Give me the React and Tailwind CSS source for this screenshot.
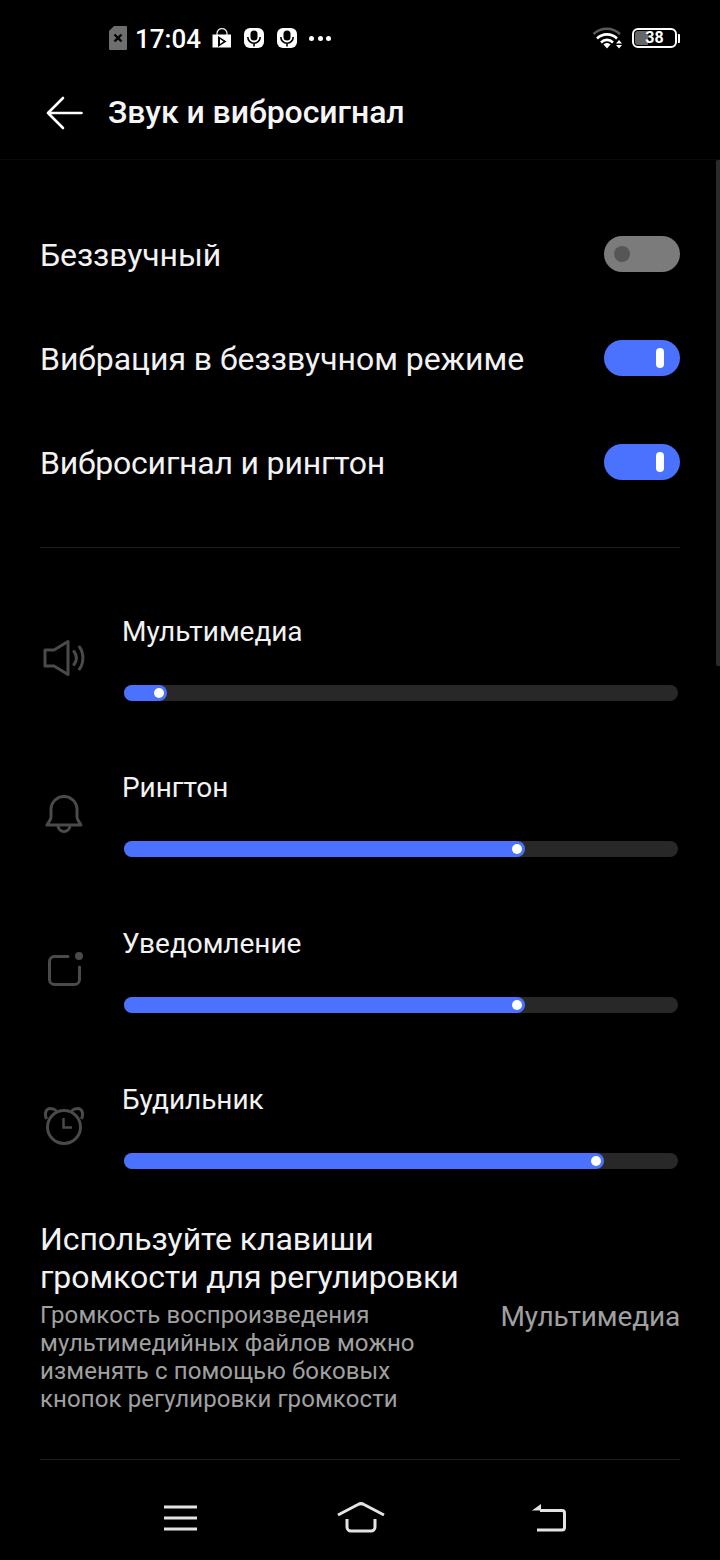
function StatusBar() {
  return (
    <div className="h-[76px] flex items-center pl-[109px] pr-[40px] justify-between shrink-0">
      <div className="flex items-center h-[28px]">
        <svg width="18" height="24" viewBox="0 0 18 24">
          <path d="M5 0h12a1 1 0 0 1 1 1v22a1 1 0 0 1-1 1H1a1 1 0 0 1-1-1V5z" fill="#6e6e6e" />
          <path d="M5.500 8.500l7 7M12.500 8.500l-7 7" stroke="#000" strokeWidth="2.400" />
        </svg>
        <span className="ml-[8px] mt-[2px] text-[26px] font-medium text-white leading-none w-[70px] whitespace-nowrap">17:04</span>
        <svg width="20" height="20" viewBox="0 0 20 20" className="ml-[7px]">
          <path d="M5 7V5.500a5 5 0 0 1 10 0V7" stroke="#e0e0e0" strokeWidth="1.300" fill="none" />
          <path d="M0.500 6.500h18.500v13H0.500z" fill="#fff" />
          <path d="M6 8l8.500 5.500L6 19z" fill="#000" />
          <path d="M8 11l3.500 2.500L8 16z" fill="#fff" />
        </svg>
        <Mic className="ml-[12px]" />
        <Mic className="ml-[13px]" />
        <div className="ml-[12px] flex gap-[3.5px]">
          <div className="w-[5px] h-[5px] rounded-full bg-white" />
          <div className="w-[5px] h-[5px] rounded-full bg-white" />
          <div className="w-[5px] h-[5px] rounded-full bg-white" />
        </div>
      </div>
      <div className="flex items-center">
        <svg width="32" height="24" viewBox="0 0 32 24">
          <path d="M1.500 8C9 1 20.500 1 28 8" stroke="#5a5a5a" strokeWidth="2.400" fill="none" />
          <path d="M5 12.500C10.500 7 19.500 7 25 12.500" stroke="#fff" strokeWidth="2.600" fill="none" />
          <path d="M9 16.500C12.500 13 17.500 13 21 16.500" stroke="#fff" strokeWidth="2.600" fill="none" />
          <path d="M11.500 18.500C13.500 16.500 16.500 16.500 18.500 18.500L15 22.500z" fill="#fff" />
          <path d="M27 14l3 3.500h-6zM27 22.500l3-3.500h-6z" fill="#fff" />
        </svg>
        <div className="relative ml-[8px] w-[45px] h-[20px] rounded-[6px] border-2 border-white overflow-hidden flex items-center justify-center">
          <div className="absolute left-[1px] top-[1px] bottom-[1px] w-[13px] rounded-l-[3px] bg-[#666]" />
          <span className="relative text-[16px] font-bold text-white leading-none">38</span>
        </div>
        <div className="ml-[1px] w-[2px] h-[9px] bg-white rounded-r-[1px]" />
      </div>
    </div>
  );
}

function Mic({ className }) {
  return (
    <svg width="20" height="20" viewBox="0 0 20 20" className={className}>
      <rect x="0" y="0" width="20" height="20" rx="6" fill="#fff" />
      <rect x="6.500" y="2.500" width="7" height="10" rx="3.500" fill="#000" />
      <path d="M3.800 9a6.200 6.200 0 0 0 12.400 0M10 15.500v3" stroke="#000" strokeWidth="1.600" fill="none" />
    </svg>
  );
}

function Toggle({ on }) {
  return on ? (
    <div className="w-[76px] h-[36px] rounded-full flex items-center justify-end pr-[16px] bg-[#4a72ff]">
      <div className="w-[8px] h-[20px] rounded-full bg-white" />
    </div>
  ) : (
    <div className="w-[76px] h-[36px] rounded-full flex items-center pl-[10px] bg-[#7b7b7b]">
      <div className="w-[16px] h-[16px] rounded-full bg-[#565656]" />
    </div>
  );
}

function ToggleRow({ label, on, labelClass }) {
  return (
    <div className="h-[104px] flex items-center justify-between">
      <span className={"mt-[2px] text-[32px] text-[#f2f2f2] leading-none " + (labelClass || "")}>{label}</span>
      <Toggle on={on} />
    </div>
  );
}

function SliderRow({ label, icon, value }) {
  return (
    <div className="h-[156px] flex">
      <div className="w-[82px] shrink-0 pt-[23px]">{icon}</div>
      <div className="flex-1">
        <div className="h-[36px] mt-[3px] text-[28px] leading-[36px] text-[#f2f2f2] tracking-[-0.05px]">{label}</div>
        <div className="mt-[35px] mx-[2px] h-[16px] rounded-full bg-[#282828]">
          <div className="relative h-[16px] rounded-full bg-[#4a72ff]" style={{ width: value }}>
            <div className="absolute right-[3px] top-[3px] w-[10px] h-[10px] rounded-full bg-white" />
          </div>
        </div>
      </div>
    </div>
  );
}

const ic = { stroke: "#4a4a4a", strokeWidth: 3, fill: "none" };

const SpeakerIcon = (
  <svg width="48" height="48" viewBox="0 0 48 48">
    <path d="M5 16h9L28 7.500v33L14 32H5z" {...ic} strokeLinejoin="round" />
    <path d="M34 17.500c3 4 3 9 0 13" {...ic} strokeLinecap="round" />
    <path d="M39.500 13c4.500 6 4.500 16 0 22" {...ic} strokeLinecap="round" />
  </svg>
);
const BellIcon = (
  <svg width="48" height="48" viewBox="0 0 48 48">
    <path d="M11 24V19.500a13 13 0 0 1 26 0V27c0 3 2.500 5 4 8H7c1.500-3 4-5 4-8z" {...ic} strokeLinejoin="round" />
    <path d="M18 35.500a6 6 0 0 0 12 0" {...ic} />
  </svg>
);
const NoteIcon = (
  <svg width="48" height="48" viewBox="0 0 48 48">
    <path d="M28 10.500H14.500a5 5 0 0 0-5 5v18a5 5 0 0 0 5 5h20a5 5 0 0 0 5-5V21" {...ic} strokeLinecap="round" />
    <circle cx="39" cy="10" r="4" fill="#4a4a4a" />
  </svg>
);
const AlarmIcon = (
  <svg width="48" height="48" viewBox="0 0 48 48">
    <circle cx="24" cy="25" r="16.500" {...ic} />
    <path d="M6.500 17C4 11 6 6.500 10.500 6.500C13 6.500 15 7.500 16.500 9M41.500 17C44 11 42 6.500 37.500 6.500C35 6.500 33 7.500 31.500 9" {...ic} />
    <path d="M23.500 16v9.500h8.500" {...ic} strokeWidth="2.500" />
  </svg>
);

function Nav() {
  const c = { stroke: "#e4e4e4", strokeWidth: 3, fill: "none" };
  return (
    <div className="h-[86px] flex items-center justify-between pl-[164px] pr-[154px] pt-[2px]">
      <svg width="34" height="30" viewBox="0 0 34 30">
        <path d="M0 4h33M0 15h33M0 26h33" {...c} />
      </svg>
      <svg width="48" height="32" viewBox="0 0 48 32" className="mr-[7px]">
        <path d="M1 13L21 2.500a6 6 0 0 1 6 0L47 13" {...c} />
        <path d="M10 17v8a4 4 0 0 0 4 4h20a4 4 0 0 0 4-4v-8" {...c} />
      </svg>
      <svg width="36" height="30" viewBox="0 0 36 30">
        <path d="M2 7.500L11 1v6.500z" fill="#e4e4e4" />
        <path d="M10 7.500h22a2.500 2.500 0 0 1 2.500 2.500v14.500a2.500 2.500 0 0 1-2.500 2.500H7" {...c} />
      </svg>
    </div>
  );
}

export default function App() {
  return (
    <div className="relative w-[720px] h-[1560px] bg-black overflow-hidden flex flex-col font-['Roboto',sans-serif]">
      <StatusBar />
      <div className="h-[84px] shrink-0 flex items-start border-b border-[#0a0a0a]">
        <svg width="38" height="34" viewBox="0 0 38 34" className="ml-[46px] mt-[20px]">
          <path d="M35.500 17H2M17 2L2 17l15 15" stroke="#fff" strokeWidth="2.600" fill="none" strokeLinecap="round" strokeLinejoin="round" />
        </svg>
        <span className="ml-[24px] mt-[17px] text-[32px] font-medium text-[#f5f5f5] leading-[38px] tracking-[-0.05px]">Звук и вибросигнал</span>
      </div>
      <div className="absolute right-0 top-[160px] w-[4px] h-[506px] bg-[#2b2b2b] rounded-l-[2px]" />
      <div className="flex-1 px-[40px] pt-[42px]">
        <ToggleRow label="Беззвучный" on={false} labelClass="tracking-[-0.1px]" />
        <ToggleRow label="Вибрация в беззвучном режиме" on labelClass="tracking-[-0.04px]" />
        <ToggleRow label="Вибросигнал и рингтон" on labelClass="tracking-[-0.2px]" />
        <div className="mt-[33px] h-[1px] bg-[#1e1e1e]" />
        <div className="pt-[63px]">
          <SliderRow label="Мультимедиа" icon={SpeakerIcon} value={43} />
          <SliderRow label="Рингтон" icon={BellIcon} value={401} />
          <SliderRow label="Уведомление" icon={NoteIcon} value={401} />
          <SliderRow label="Будильник" icon={AlarmIcon} value={480} />
        </div>
        <div className="-mt-[15px] flex items-center justify-between">
          <div className="w-[440px]">
            <div className="text-[32px] leading-[38px] text-[#f2f2f2] whitespace-nowrap tracking-[-0.08px]">Используйте клавиши<br />громкости для регулировки</div>
            <div className="mt-[5px] text-[24px] leading-[28px] text-[#a0a0a0] whitespace-nowrap tracking-[0.1px]">Громкость воспроизведения<br />мультимедийных файлов можно<br />изменять с помощью боковых<br />кнопок регулировки громкости</div>
          </div>
          <span className="mb-[0px] text-[28px] leading-none text-[#a0a0a0] tracking-[-0.15px]">Мультимедиа</span>
        </div>
        <div className="mt-[46px] h-[1px] bg-[#1e1e1e]" />
      </div>
      <Nav />
    </div>
  );
}
